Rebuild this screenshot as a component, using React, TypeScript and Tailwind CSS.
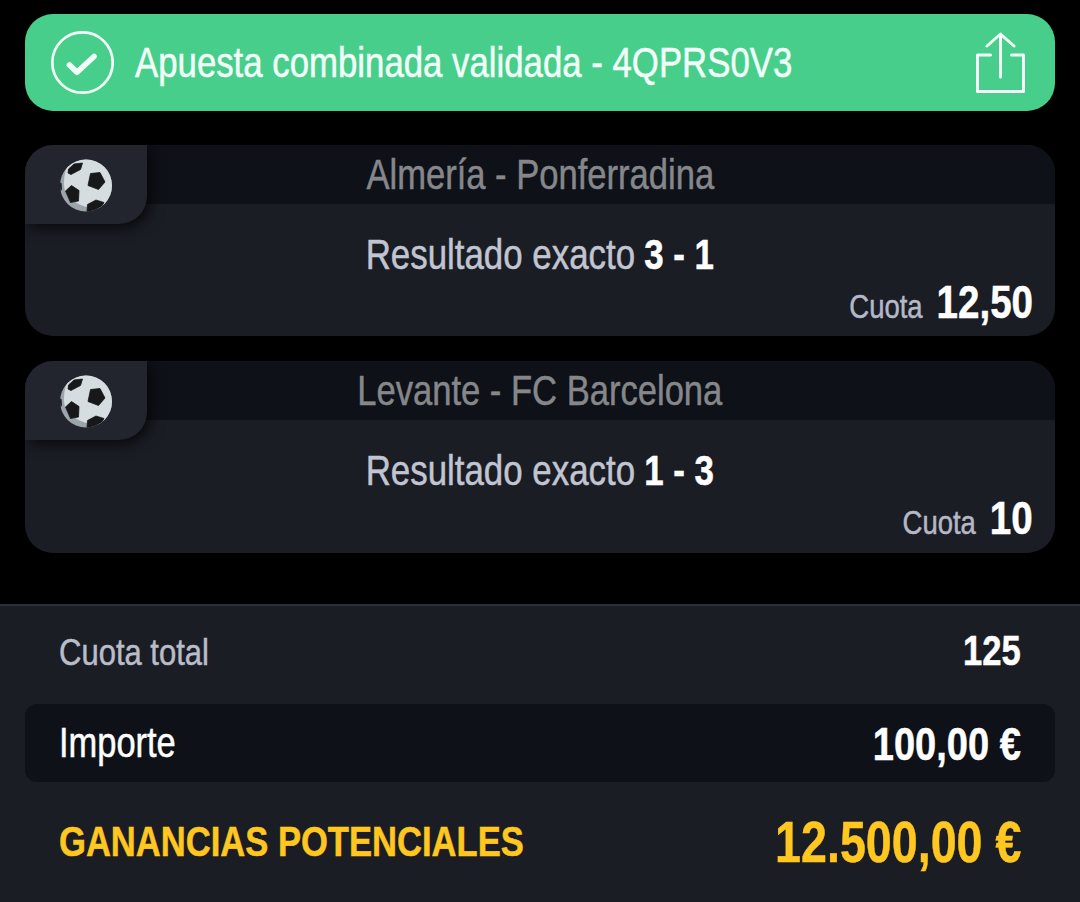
import React from "react";

const bets = [
  { match: "Almería - Ponferradina", score: "3 - 1", odds: "12,50" },
  { match: "Levante - FC Barcelona", score: "1 - 3", odds: "10" },
];

const CheckCircle = () => {
  return (
    <svg width="64" height="64" viewBox="0 0 64 64" fill="none" stroke="#f2fff9">
      <circle cx="32.5" cy="31.5" r="30.2" strokeWidth="2.7" />
      <path d="M19.5 34 27 41.2 44 25.5" strokeWidth="5.6" strokeLinecap="round" strokeLinejoin="round" />
    </svg>
  );
};

const ShareIcon = () => {
  return (
    <svg width="52" height="62" viewBox="0 0 52 62" fill="none" stroke="#f2fff9" strokeWidth="3" strokeLinecap="round" strokeLinejoin="round">
      <path d="M15.5 23H2.5V59.5H48.500V23H36.500" />
      <path d="M25.500 45V2M12 14 25.500 2 39 14" />
    </svg>
  );
};

const Ball = () => {
  return (
    <svg width="54" height="54" viewBox="0 0 54 54">
      <clipPath id="ball">
        <circle cx="27" cy="27.5" r="26" />
      </clipPath>
      <g clipPath="url(#ball)">
        <rect width="54" height="54" fill="#9ca5ab" />
        <path d="M12 0Q3 16 5.500 31Q12 46 30 49.500L54 52V0Z" fill="#d5dde0" />
        <g fill="#171819" stroke="#171819" strokeWidth="0.8" strokeLinejoin="round">
          <path d="M9.500 11 15 6 23.500 5 21.500 11.500 12 16.500 9 15Z" />
          <path d="M31.500 15.500 41 14.500 46 24 39.500 31.500 29 27.500Z" />
          <path d="M6.500 33 12.500 27.500 20 32.500 19.500 43 11.500 44.500Z" />
          <path d="M28.500 46.500 37 42 45 44.500 40 54 28 54Z" />
          <path d="M0 25 2 25 2.500 31 1 34 0 33Z" />
        </g>
      </g>
    </svg>
  );
};

const BetCard = ({ match, score, odds }: { match: string; score: string; odds: string }) => {
  return (
    <div className="relative h-[191px] overflow-hidden rounded-[28px] bg-[#1b1d25] last:h-[192px]">
      <div className="flex h-[59px] items-center justify-center bg-[#0e1118] text-[42px] text-[#85878a]">
        <span className="scale-x-[0.823]">{match}</span>
      </div>
      <div className="mt-[24px] flex h-[54px] items-center justify-center text-[42px] text-[#c1c5d1]">
        <div className="scale-x-[0.83]">
          <span>Resultado exacto</span>
          <span className="ml-[11px] font-bold text-white">{score}</span>
        </div>
      </div>
      <div className="-mt-1 flex justify-end pr-[22px]">
        <div className="flex origin-right scale-x-[0.82] items-baseline">
          <span className="text-[33.500px] text-[#b5b9c5]">Cuota</span>
          <span className="ml-[17px] text-[47px] font-bold text-white">{odds}</span>
        </div>
      </div>
      <div className="absolute left-0 top-0 flex h-[79px] w-[122px] items-center justify-center rounded-br-[28px] bg-[#22242e] shadow-[4px_4px_14px_rgba(0,0,0,0.7)]">
        <Ball />
      </div>
    </div>
  );
};

const App = () => {
  return (
    <div className="flex h-[902px] w-[1080px] flex-col overflow-hidden bg-black font-['Liberation_Sans',sans-serif] leading-none whitespace-nowrap [-webkit-text-stroke:0.5px]">
      <div className="mx-[25px] mt-[14px] flex h-[97px] items-center rounded-[28px] bg-[#48ce8b] pl-[25px] pr-[28px]">
        <CheckCircle />
        <span className="ml-[21px] origin-left scale-x-[0.828] text-[42px] text-[#f2fff9]">
          Apuesta combinada validada - 4QPRS0V3
        </span>
        <div className="ml-auto">
          <ShareIcon />
        </div>
      </div>

      <div className="mx-[25px] mt-[34px] flex flex-col gap-[25px]">
        {bets.map((bet) => (
          <BetCard key={bet.match} {...bet} />
        ))}
      </div>

      <div className="mt-[51px] flex-1 border-t-2 border-[#2c2f38] bg-[#1b1d25] px-[25px]">
        <div className="flex h-[98px] items-baseline justify-between px-[34px] pt-[23px]">
          <span className="origin-left scale-x-[0.838] text-[37px] text-[#b9bdc8]">Cuota total</span>
          <span className="origin-right scale-x-[0.805] text-[43px] font-bold text-white">125</span>
        </div>
        <div className="flex h-[78px] items-center justify-between rounded-[12px] bg-[#0e1118] px-[34px] text-white">
          <span className="origin-left scale-x-[0.82] text-[42px]">Importe</span>
          <span className="origin-right scale-x-[0.81] text-[47px] font-bold">100,00 €</span>
        </div>
        <div className="flex h-[120px] items-center justify-between px-[34px] font-bold text-[#ffc71f]">
          <span className="origin-left scale-x-[0.823] text-[42px]">GANANCIAS POTENCIALES</span>
          <span className="origin-right scale-x-[0.804] text-[58px]">12.500,00 €</span>
        </div>
      </div>
    </div>
  );
};

export default App;
